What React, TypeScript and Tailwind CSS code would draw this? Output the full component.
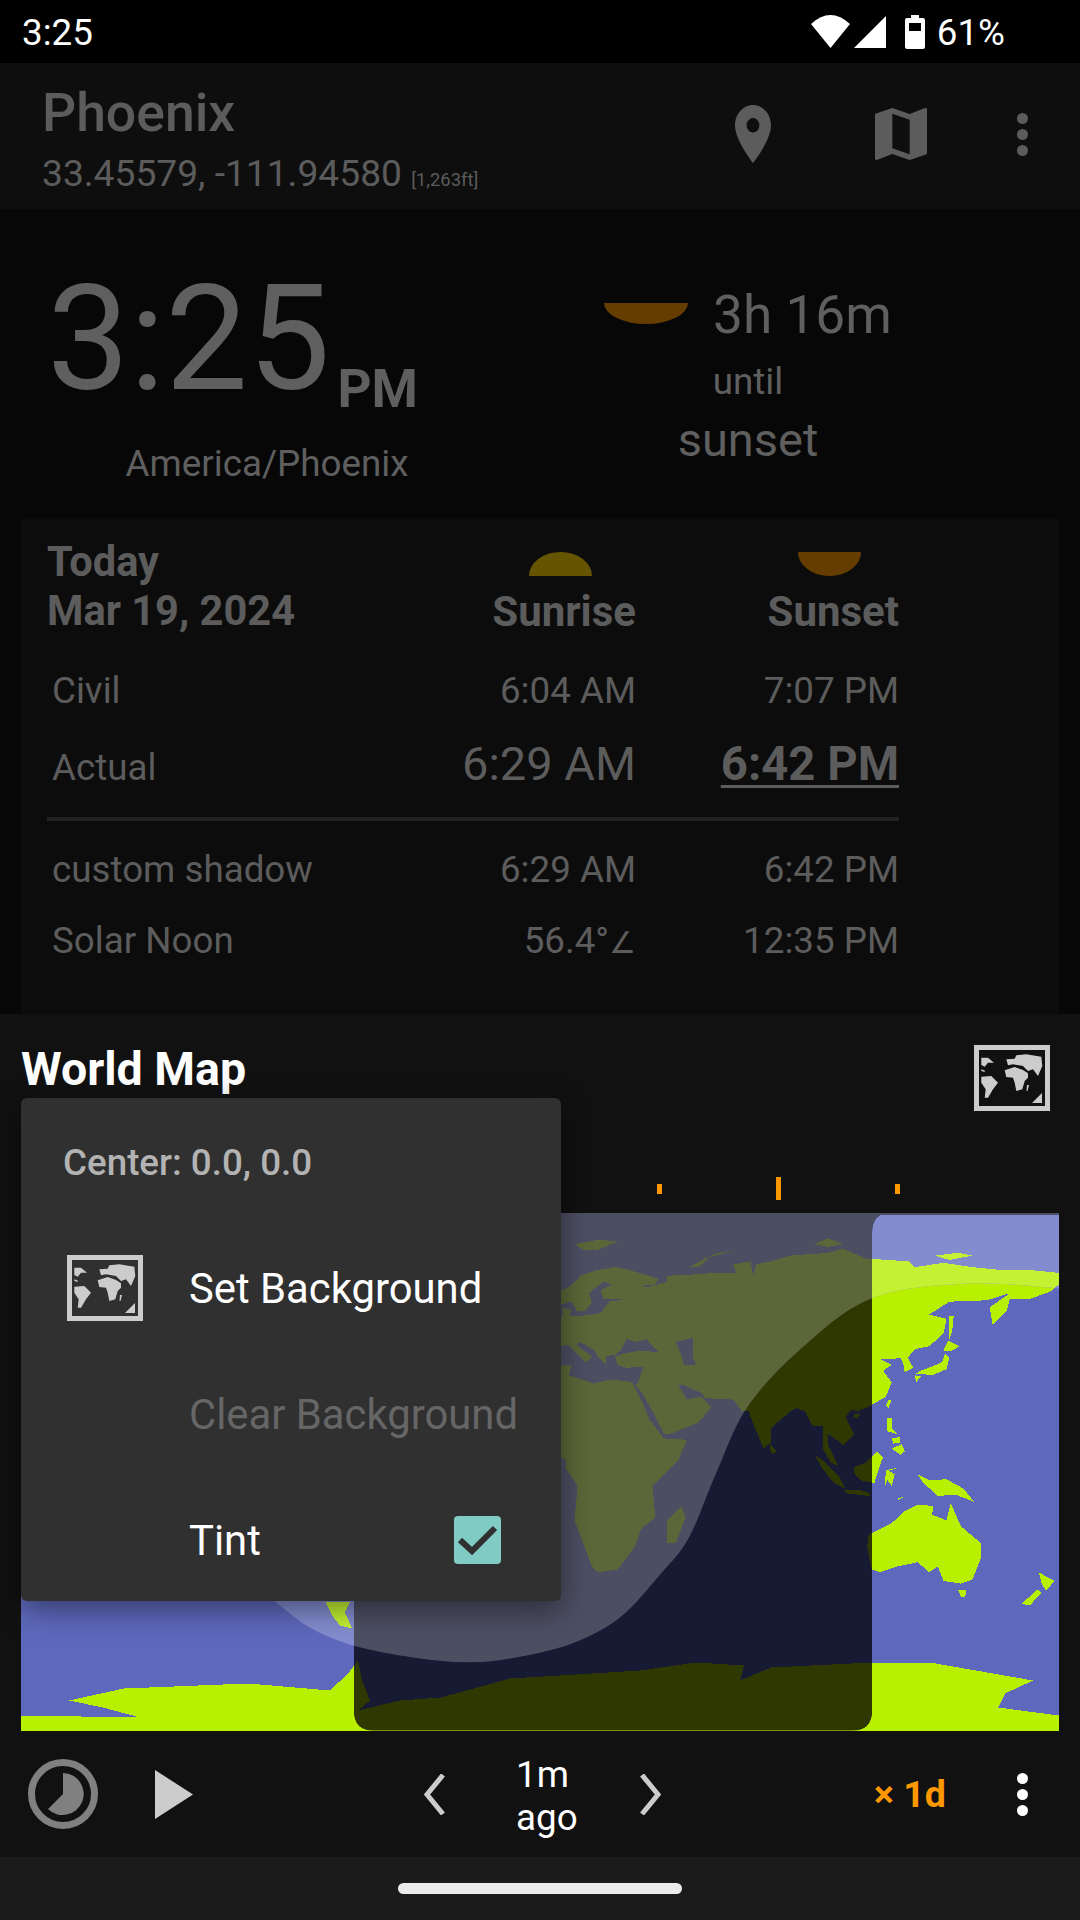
import React from 'react';

type Pt = [number, number];

// outlines in lon/lat, the map is a plain equirectangular 1038x518
const LAND: Pt[][] = [
  // eurasia
  [[5,59],[5,62],[10,64],[14,68],[20,70],[26,71],[31,70],[41,67],[40,65],[35,64.5],[37,64],[44,66],[44,68],[54,68.5],[60,69],[68,69],[67,72],[73,73],[74,68],[75,72],[80,73],[87,75],[100,76],[105,77.5],[113,74],[128,73],[130,71],[140,72.5],[150,71],[160,70],[170,70],[180,69],[180,65],[177,62.5],[170,60],[163,60],[162,56],[157,51],[156,57],[163,62],[155,59.5],[142,59],[135,54.5],[141,53],[140,48],[135,43.5],[130,42.5],[127.5,39.5],[129.5,36],[126.5,34.5],[126,37.5],[125,39.5],[121.5,39],[118,39],[122,37],[119,35],[122,31],[120,26],[114,22.5],[110,21],[108,21.5],[106,19],[109,13],[105,9],[103,11],[100,13],[100,9],[103.5,2],[101,3],[98,8],[98,16],[94.5,16],[92,21],[89,22],[87,21],[80,15],[80,10],[77.5,8],[73,19],[72.5,21],[70,21],[67,25],[57,25.5],[56.5,27],[50,30],[48,30],[51,25],[56,26],[59.5,22.5],[55,17],[45,13],[43,13],[39,21],[35,28],[33,30],[34,31],[36,36.5],[30,36],[27,37],[26,40],[29,41],[35,42],[41,41.5],[38,44.5],[37,46],[33,45],[30,46],[28,42],[26,40.5],[23,40],[23,37],[20,40],[19,42],[14,45],[12.5,44],[18,40],[16,38],[10,44],[3,43],[0,39],[-2,37],[-6,36],[-9,38],[-9,43],[-1,44],[-2,48],[2,51],[8,54],[8,57],[11,56],[10,54],[14,54],[21,55],[24,59],[30,60],[22,60],[21,63],[25,65],[22,66],[17,62],[18,59],[16,56],[13,55.5],[11,59],[7,58]],
  // caspian, cut out by evenodd
  [[47,45],[53,46.5],[53,40],[54,37],[50,37],[49,40.5]],
  // africa
  [[32.5,30],[32,31],[25,32],[20,31],[19,30.5],[10,33.5],[11,37],[-6,36],[-10,30],[-17,21],[-17,14],[-8,4.5],[5,6],[9,4],[9,1],[13,-5],[12,-17],[18,-33],[20,-35],[27,-34],[33,-26],[35,-20],[40,-16],[39,-5],[48,4],[51,11],[43,11.5],[38,18],[35.5,24]],
  [[49,-12],[50.5,-16],[47,-25],[44,-25],[44,-17]],
  [[80,9.5],[82,7],[80.5,6],[79.7,8]],
  // japan and around
  [[130.5,34],[136,33.5],[141,35.5],[142,39.5],[140.5,41],[139.5,38],[136,36.5],[132,35]],
  [[140,42],[141.5,45.5],[145.5,43.5],[143,42]],
  [[130,33.5],[132,33],[130.5,31]],
  [[142,46],[143,49],[143.5,54],[142,54],[142,49]],
  [[121,25],[122,25],[120.8,22],[120,23]],
  [[109,20],[111,20],[110,18.3],[108.7,19]],
  // philippines
  [[120.5,18.5],[122,18.5],[122,15],[124,13],[120.5,14]],
  [[122,8],[125.5,9.5],[126.5,7],[125,5.8]],
  [[122,11.5],[125,12],[125,10],[122.5,9.7]],
  // indonesia
  [[109,1.5],[113,3],[117,7],[119,5],[117.5,1],[116,-4],[111,-3],[109,-0.5]],
  [[95.5,5.5],[98,4],[104,-2],[106,-6],[102,-4],[98,1]],
  [[105.5,-6.5],[111,-6.5],[114.5,-7.5],[114,-8.5],[106,-7.5]],
  [[119.5,-5.5],[120,0.5],[125,1.5],[121,0.3],[123,-1],[122,-5],[120.5,-3]],
  [[131,-1],[135,-3],[141,-2.7],[147,-6],[150.5,-10.5],[144,-8],[138,-8.5],[133,-4]],
  [[124,-9.5],[127,-8.5],[124,-10]],
  // australia, nz
  [[114,-22],[113.5,-26],[115,-34],[118,-35],[124,-33],[131,-31.5],[135,-35],[138,-33],[140,-38],[146,-39],[150,-37.5],[153,-30],[153,-25],[146,-19],[142.5,-11],[141,-17],[136,-15],[136.5,-12],[131,-11.5],[126,-14],[122,-18]],
  [[145,-41],[148,-41],[147.5,-43.5],[146,-43.5]],
  [[173,-35],[175.5,-36.5],[178.5,-38],[175.5,-41.5],[174,-39]],
  [[172.5,-41],[174,-42],[170,-46.5],[167,-46]],
  // arctic islands
  [[12,79],[20,80.5],[27,80],[20,77],[15,77]],
  [[52,71],[57,74],[68,77],[60,75.5],[55,71]],
  [[95,79],[100,81],[105,79],[100,78]],
  [[137,75],[145,76],[150,75],[142,73.5]],
];

// these two were read straight off the screen
const SCREEN_LAND: Pt[][] = [
  [[21,1715],[140,1717],[103,1707],[69,1700],[124,1688],[248,1683],[330,1690],[348,1673],[358,1660],[362,1680],[370,1700],[358,1710],[400,1700],[441,1697],[510,1678],[640,1670],[696,1662],[744,1665],[740,1680],[771,1667],[871,1662],[930,1662],[1033,1680],[1005,1693],[998,1707],[1059,1715],[1059,1731],[21,1731]],
  [[325,1601],[350,1601],[345,1612],[352,1628],[340,1625],[332,1615]],
];

const toPath = (pts: Pt[]) =>
  'M' + pts.map(([x, y]) => `${x.toFixed(1)} ${y.toFixed(1)}`).join('L') + 'Z';

const landPath =
  LAND.map((s) =>
    toPath(s.map(([lon, lat]) => [519 + lon * 2.883, 259 - lat * 2.878] as Pt)),
  ).join('') +
  SCREEN_LAND.map((s) => toPath(s.map(([x, y]) => [x - 21, y - 1212] as Pt))).join('');

// terminator, read off the reference and smoothed with catmull-rom
const EDGE: Pt[] = [[1038,76],[946,71],[850,86],[778,138],[726,195],[695,261],[668,325],[640,361],[599,405],[551,431],[495,445],[447,450],[392,445],[332,433],[289,415],[254,389]];

function smooth(pts: Pt[]) {
  let d = `M${pts[0][0]} ${pts[0][1]}`;
  for (let i = 0; i < pts.length - 1; i++) {
    const a = pts[Math.max(i - 1, 0)];
    const b = pts[i];
    const c = pts[i + 1];
    const e = pts[Math.min(i + 2, pts.length - 1)];
    d += `C${b[0] + (c[0] - a[0]) / 6} ${b[1] + (c[1] - a[1]) / 6} ${c[0] - (e[0] - b[0]) / 6} ${c[1] - (e[1] - b[1]) / 6} ${c[0]} ${c[1]}`;
  }
  return d;
}

const DAY_EDGE = smooth(EDGE) + 'L230 340L0 340L0 0L1038 0Z';
const NIGHT_BOX =
  'M333 0H871Q851 0 851 20V498Q851 518 831 518H353Q333 518 333 498ZM851 0H1038V2H851Z';

function Layer({ ocean, land }: { ocean: string; land: string }) {
  return (
    <>
      <rect width="1038" height="518" fill={ocean} />
      <path d={landPath} fill={land} fillRule="evenodd" />
    </>
  );
}

function WorldMapCanvas() {
  return (
    <svg
      viewBox="0 0 1038 518"
      className="block w-[1038px] h-[519px]"
      shapeRendering="crispEdges"
    >
      <defs>
        <clipPath id="day">
          <path d={DAY_EDGE} />
        </clipPath>
        <clipPath id="night">
          <path d={NIGHT_BOX} />
        </clipPath>
      </defs>
      <Layer ocean="#5e69bd" land="#b9f000" />
      <g clipPath="url(#day)">
        <Layer ocean="#838cce" land="#c4f233" />
      </g>
      <g clipPath="url(#night)">
        <Layer ocean="#161b33" land="#2e3800" />
        <g clipPath="url(#day)">
          <Layer ocean="#4c4e62" land="#5c6638" />
        </g>
      </g>
    </svg>
  );
}

function MapIcon({ className }: { className: string }) {
  return (
    <svg viewBox="0 0 76 66" className={className} fill="#cccccc">
      <path fillRule="evenodd" d="M0 0H76V66H0ZM5 5V61H71V5Z" />
      <path d="M7.3 12.7L14 12.7L20 17.7L14 17.7L10.7 21.7L7.3 20Z" />
      <path d="M7.3 24.3L10.7 25.5L10.7 27L7.3 26Z" />
      <path d="M7.3 31.7L17.3 31L24 37.7L19 44.3L14 52.7L10.7 52.7L11.7 44.3L7.3 37.7Z" />
      <path d="M32.3 14.3L40.7 13.7L42.3 10.3L52.3 9.3L67.3 11.7L68.3 21L64 31L59 24.3L54 26L49 21L39 19.3L34 20.3Z" />
      <path d="M30.7 25.3L40.7 22L49 25L54 28.3L54 32.7L50.7 36L48.3 44.3L42.3 46L40.7 37.7L39 32.7L32.3 32Z" />
      <path d="M53 40L55 40L53.5 46L52.5 46Z" />
      <path d="M58 58L68 48L68 58Z" />
    </svg>
  );
}

function Kebab({ color }: { color: string }) {
  return (
    <div className="flex flex-col gap-[5px]">
      <div className={`w-[11px] h-[11px] rounded-full ${color}`} />
      <div className={`w-[11px] h-[11px] rounded-full ${color}`} />
      <div className={`w-[11px] h-[11px] rounded-full ${color}`} />
    </div>
  );
}

function StatusBar() {
  return (
    <div className="h-[63px] bg-black text-white flex items-center justify-between pl-[22px] pr-[75px] text-[36.75px] leading-[44px]">
      <span className="pt-[3px]">3:25</span>
      <div className="flex items-center">
        <svg viewBox="0 0 39 33" className="w-[39px] h-[33px]" fill="#fff">
          <path d="M0 9Q19.5 -9 39 9L19.5 33Z" />
        </svg>
        <svg viewBox="0 0 32 32" className="w-[32px] h-[32px] ml-[4px]" fill="#fff">
          <path d="M0 32H32V0Z" />
        </svg>
        <svg viewBox="0 0 20 34" className="w-[20px] h-[34px] ml-[19px]" fill="#fff">
          <path
            fillRule="evenodd"
            d="M6 0H14V3H18Q20 3 20 5V32Q20 34 18 34H2Q0 34 0 32V5Q0 3 2 3H6ZM4 8V16H16V8Z"
          />
        </svg>
        <span className="ml-[12px] pt-[3px]">61%</span>
      </div>
    </div>
  );
}

function Toolbar() {
  return (
    <div className="h-[146px] bg-[#0e0e0e] flex justify-between pl-[42px] text-[#5c5c5c]">
      <div className="pt-[20px]">
        <div className="text-[53.5px] leading-[60px] font-medium">Phoenix</div>
        <div className="mt-[10px] text-[37.2px] leading-[40px] whitespace-nowrap">
          33.45579, -111.94580 <span className="text-[18.4px]">[1,263ft]</span>
        </div>
      </div>
      <div className="flex items-center pr-[52px] -mt-[4px]">
        <svg viewBox="5 2 14 20" preserveAspectRatio="none" className="w-[36px] h-[58px]" fill="#5c5c5c">
          <path d="M12 2C8.13 2 5 5.13 5 9c0 5.25 7 13 7 13s7-7.75 7-13c0-3.87-3.13-7-7-7zm0 9.5a2.5 2.5 0 0 1 0-5 2.5 2.5 0 0 1 0 5z" />
        </svg>
        <svg viewBox="3 3 18 18" className="w-[52px] h-[52px] ml-[104px]" fill="#5c5c5c">
          <path d="M20.5 3l-.16.03L15 5.1 9 3 3.36 4.9c-.21.07-.36.25-.36.48V20.5c0 .28.22.5.5.5l.16-.03L9 18.9l6 2.1 5.64-1.9c.21-.07.36-.25.36-.48V3.5c0-.28-.22-.5-.5-.5zM15 19l-6-2.11V5l6 2.11V19z" />
        </svg>
        <div className="ml-[90px]">
          <Kebab color="bg-[#5c5c5c]" />
        </div>
      </div>
    </div>
  );
}

function ClockPanel() {
  return (
    <div className="h-[310px] flex text-[#5f5f5f]">
      <div className="w-[436px] ml-[47px] pt-[55px] shrink-0">
        <div className="flex items-end h-[150px]">
          <span className="text-[147px] leading-[150px]">3:25</span>
          <span className="text-[53px] leading-[50px] font-bold ml-[7px]">PM</span>
        </div>
        <div className="mt-[28px] text-center text-[36.75px] leading-[44px] pl-[4px]">America/Phoenix</div>
      </div>
      <div className="ml-[121px] w-[288px] pt-[76px]">
        <div className="flex items-start">
          <svg viewBox="0 0 84 21" className="w-[84px] h-[21px] mt-[18px] shrink-0">
            <path d="M0 0H84A42 21 0 0 1 0 0Z" fill="#663d00" />
          </svg>
          <span className="ml-[25px] text-[53.2px] leading-[60px] whitespace-nowrap">3h 16m</span>
        </div>
        <div className="mt-[15px] text-center text-[36.75px] leading-[44px]">until</div>
        <div className="mt-[9px] text-center text-[47px] leading-[54px]">sunset</div>
      </div>
    </div>
  );
}

function Row({
  label,
  rise,
  set,
  className,
}: {
  label: string;
  rise: React.ReactNode;
  set: React.ReactNode;
  className: string;
}) {
  return (
    <div className={`grid grid-cols-[392px_196px_263px] items-baseline text-[36.75px] leading-[44px] ${className}`}>
      <div className="pl-[4px]">{label}</div>
      <div className="text-right whitespace-nowrap">{rise}</div>
      <div className="text-right whitespace-nowrap">{set}</div>
    </div>
  );
}

function TimesCard() {
  return (
    <div className="h-[495px] mx-[21px] bg-[#0c0c0c] pt-[18px] pl-[27px] text-[#5c5c5c]">
      <div className="grid grid-cols-[392px_196px_263px]">
        <div className="-ml-[1px] text-[41.6px] leading-[49px] font-bold">
          <div>Today</div>
          <div>Mar 19, 2024</div>
        </div>
        <div className="flex flex-col items-end">
          <svg viewBox="0 0 63 24" className="w-[63px] h-[24px] mt-[15px] mr-[44px]">
            <path d="M0 24A31.5 24 0 0 1 63 24Z" fill="#665500" />
          </svg>
          <div className="mt-[11px] text-[42px] leading-[49px] font-bold">Sunrise</div>
        </div>
        <div className="flex flex-col items-end">
          <svg viewBox="0 0 63 24" className="w-[63px] h-[24px] mt-[15px] mr-[38px]">
            <path d="M0 0H63A31.5 24 0 0 1 0 0Z" fill="#663d00" />
          </svg>
          <div className="mt-[11px] text-[42px] leading-[49px] font-bold">Sunset</div>
        </div>
      </div>
      <Row className="mt-[33px]" label="Civil" rise="6:04 AM" set="7:07 PM" />
      <Row
        className="mt-[24px]"
        label="Actual"
        rise={<span className="text-[47px] leading-[54px]">6:29 AM</span>}
        set={
          <span className="text-[47.25px] leading-[54px] font-bold underline decoration-[3px] underline-offset-[5px]">
            6:42 PM
          </span>
        }
      />
      <div className="mt-[26px] w-[852px] h-[4px] -ml-[1px] bg-[#222222]" />
      <Row className="mt-[27px]" label="custom shadow" rise="6:29 AM" set="6:42 PM" />
      <Row
        className="mt-[27px]"
        label="Solar Noon"
        rise={
          <>
            56.4°<span className="text-[30px] font-['DejaVu_Sans']">∠</span>
          </>
        }
        set="12:35 PM"
      />
    </div>
  );
}

function OverflowMenu() {
  return (
    <div className="absolute left-[21px] top-[84px] w-[540px] h-[503px] bg-[#303030] rounded-[6px] shadow-[0_8px_30px_rgba(0,0,0,0.45)]">
      <div className="pt-[44px] pl-[42px] text-[36.75px] leading-[42px] font-medium text-[#b3b3b3]">
        Center: 0.0, 0.0
      </div>
      <div className="mt-[42px] text-[41.8px]">
        <div className="h-[126px] flex items-center pl-[46px] text-white">
          <MapIcon className="w-[76px] h-[66px] -mt-[3px] shrink-0" />
          <span className="ml-[46px]">Set Background</span>
        </div>
        <div className="h-[126px] flex items-center pl-[168px] text-[#666666]">Clear Background</div>
        <div className="h-[126px] flex items-center pl-[168px] text-white">
          Tint
          <div className="ml-auto mr-[60px] -mt-[3px] w-[47px] h-[48px] rounded-[4px] bg-[#80cbc4]">
            <svg viewBox="0 0 47 48" className="w-[47px] h-[48px]" fill="none" stroke="#303030" strokeWidth="6">
              <path d="M6 24L18 35L41 12" />
            </svg>
          </div>
        </div>
      </div>
    </div>
  );
}

function Playback() {
  return (
    <div className="h-[126px] flex items-center pl-[28px] pr-[52px] text-white">
      <svg viewBox="0 0 70 70" className="w-[70px] h-[70px] shrink-0">
        <circle cx="35" cy="35" r="31.5" fill="none" stroke="#808080" strokeWidth="7" />
        <path d="M35 35V14A21 21 0 1 1 20 50Z" fill="#808080" />
      </svg>
      <svg viewBox="0 0 38 49" className="w-[38px] h-[49px] ml-[57px] shrink-0" fill="#cccccc">
        <path d="M0 0L38 24.5L0 49Z" />
      </svg>
      <svg viewBox="0 0 22 41" className="w-[22px] h-[41px] ml-[231px] shrink-0" fill="none" stroke="#cccccc" strokeWidth="5">
        <path d="M19 1L3 20.5L19 40" />
      </svg>
      <div className="w-[193px] pl-[70px] pt-[3px] text-left text-[36.75px] leading-[43px]">
        <div>1m</div>
        <div>ago</div>
      </div>
      <svg viewBox="0 0 22 41" className="w-[22px] h-[41px] shrink-0" fill="none" stroke="#cccccc" strokeWidth="5">
        <path d="M3 1L19 20.5L3 40" />
      </svg>
      <span className="ml-[213px] text-[37.5px] font-bold text-[#ff9800] whitespace-nowrap">× 1d</span>
      <div className="ml-auto">
        <Kebab color="bg-white" />
      </div>
    </div>
  );
}

function WorldMapSection() {
  return (
    <div className="relative bg-[#111111]">
      <div className="h-[163px] flex justify-between items-start pl-[21px] pr-[30px]">
        <div className="pt-[28px] text-[46.5px] leading-[54px] font-bold text-white">World Map</div>
        <MapIcon className="w-[76px] h-[68px] mt-[30px]" />
      </div>
      <div className="h-[23px] flex items-center pl-[657px] gap-[114px]">
        <div className="w-[5px] h-[10px] bg-[#ff9800]" />
        <div className="w-[5px] h-[23px] bg-[#ff9800]" />
        <div className="w-[5px] h-[10px] bg-[#ff9800]" />
      </div>
      <div className="mt-[12px] mx-[21px]">
        <WorldMapCanvas />
      </div>
      <Playback />
      <OverflowMenu />
    </div>
  );
}

export default function App() {
  return (
    <div className="w-[1080px] h-[1920px] overflow-hidden bg-[#070707] font-['Roboto',sans-serif]">
      <StatusBar />
      <Toolbar />
      <ClockPanel />
      <TimesCard />
      <WorldMapSection />
      <div className="h-[63px] bg-[#1b1b1b] flex items-center justify-center">
        <div className="w-[284px] h-[11px] rounded-full bg-[#ebebeb]" />
      </div>
    </div>
  );
}
